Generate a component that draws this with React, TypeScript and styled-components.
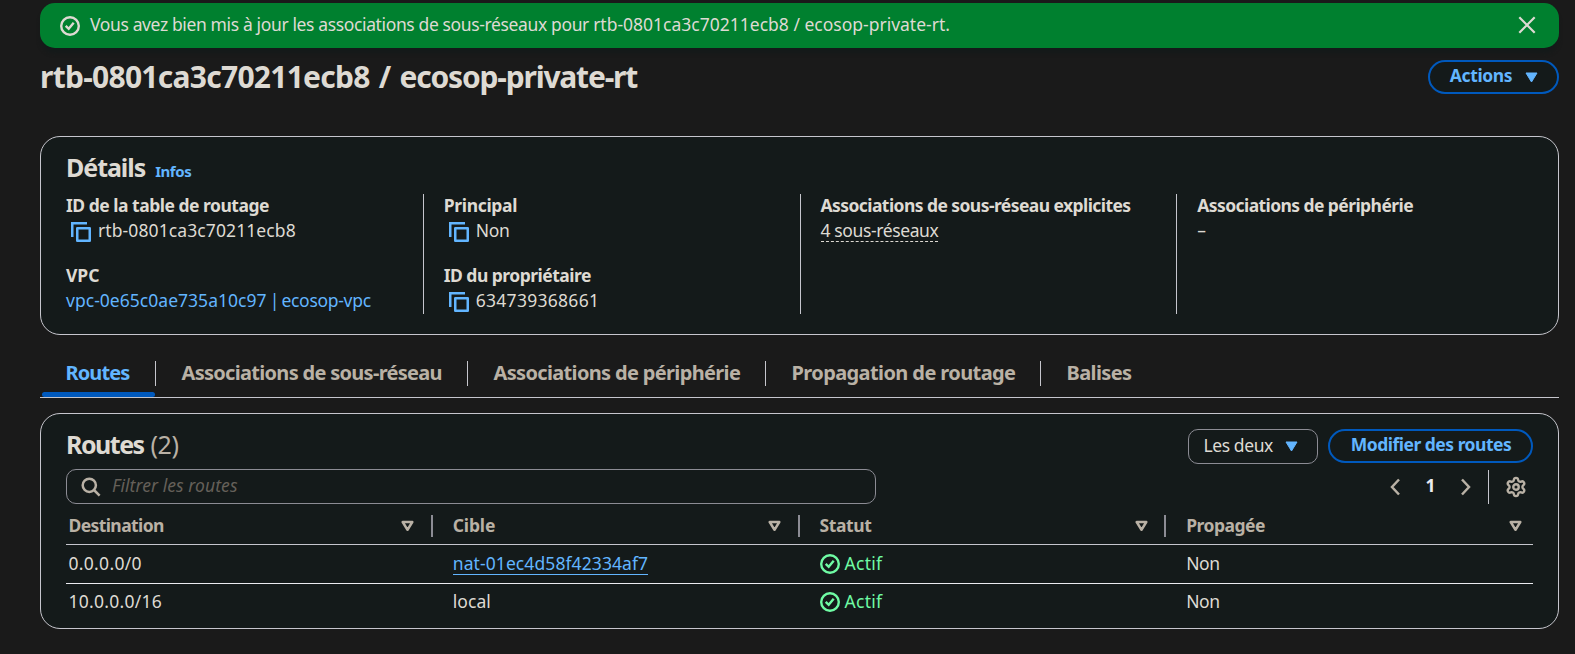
import React from 'react';
import styled, { createGlobalStyle } from 'styled-components';
import { Settings } from 'lucide-react';

const c = {
  page: '#1a1a1a',
  surface: '#141a1a',
  border: '#c6c6cd',
  control: '#8c8c94',
  text: '#dedad3',
  muted: '#b9b1a5',
  blue: '#62b5ff',
  blueDark: '#0059bd',
  success: '#6ffba4',
  banner: '#00802f',
};

const GlobalStyle = createGlobalStyle`
  * { box-sizing: border-box; }
  body {
    margin: 0;
    background: ${c.page};
    color: ${c.text};
    font-family: "Noto Sans", "Open Sans", sans-serif;
    font-size: 17.5px;
    line-height: 25px;
    overflow: hidden;
  }
  h1, h2 { margin: 0; font-weight: 700; }
  button { font: inherit; background: none; cursor: pointer; }
  svg { display: block; flex: none; }
`;

const Page = styled.main`
  display: flex;
  flex-direction: column;
  height: 654px;
  padding: 3px 16px 0 40px;
`;

/* Letter fitting for one run of text. */
const Fit = styled.span<{ $ls?: number; $ws?: number }>`
  letter-spacing: ${(p) => p.$ls ?? 0}px;
  word-spacing: ${(p) => p.$ws ?? 0}px;
  white-space: pre;
`;

const Banner = styled.div`
  display: flex;
  align-items: center;
  height: 45px;
  padding: 0 22px 0 20px;
  border-radius: 15px;
  background: ${c.banner};
  box-shadow: 0 6px 4px -1px ${c.surface};
`;

const BannerText = styled.div`
  flex: 1;
  margin-left: 10px;
  padding-bottom: 2px;
`;

const IconButton = styled.button`
  display: flex;
  padding: 0;
  border: 0;
  color: ${c.muted};
  ${Banner} & { padding-bottom: 2px; }
`;

const TitleRow = styled.header`
  display: flex;
  align-items: flex-start;
  justify-content: space-between;
  height: 34px;
  margin-top: 12px;
`;

const PageTitle = styled.h1`
  font-size: 30px;
  line-height: 34px;
`;

const PillButton = styled.button<{ $width: number }>`
  display: flex;
  align-items: center;
  justify-content: center;
  width: ${(p) => p.$width}px;
  height: 34px;
  padding: 0 0 3px 1px;
  border: 2px solid ${c.blueDark};
  border-radius: 17px;
  background: ${c.surface};
  color: ${c.blue};
  font-weight: 700;
  gap: 13px;
  svg { margin-top: 3px; }
`;

const Card = styled.section<{ $top: number; $height: number }>`
  height: ${(p) => p.$height}px;
  margin-top: ${(p) => p.$top}px;
  padding: 15px 25px 0;
  border: 1px solid ${c.border};
  border-radius: 20px;
  background: ${c.surface};
`;

const DetailsHeader = styled.div`
  display: flex;
  align-items: baseline;
  gap: 10px;
  height: 30px;
`;

const SectionTitle = styled.h2`
  font-size: 25px;
  line-height: 31px;
`;

const InfoLink = styled.a`
  color: ${c.blue};
  font-size: 15px;
  font-weight: 700;
`;

const Columns = styled.div`
  display: grid;
  grid-template-columns: repeat(4, 1fr);
  height: 120px;
  margin: 12px -20px 0;
`;

const Column = styled.div`
  display: flex;
  flex-direction: column;
  gap: 20px;
  padding-left: 20px;
  & + & { border-left: 1px solid ${c.border}; }
`;

const Field = styled.div`
  &:first-child { margin-top: -1px; }
`;

const Label = styled.div`
  font-weight: 700;
`;

const Value = styled.div`
  display: flex;
  align-items: center;
  height: 25px;
  svg { margin: 3px 7px 0 5px; }
`;

const Link = styled.a`
  color: ${c.blue};
`;

const UnderlinedLink = styled(Link)`
  display: inline-block;
  height: 23px;
  line-height: 22px;
  border-bottom: 1px solid ${c.blue};
`;

const Dashed = styled.span`
  height: 23px;
  line-height: 22px;
  border-bottom: 1px dashed ${c.text};
`;

const TabList = styled.nav`
  display: flex;
  height: 43px;
  margin-top: 20px;
  border-bottom: 1px solid ${c.border};
`;

const Tab = styled.a<{ $active?: boolean; $width: number }>`
  position: relative;
  width: ${(p) => p.$width}px;
  padding-top: 6px;
  color: ${(p) => (p.$active ? c.blue : c.muted)};
  font-size: 20px;
  font-weight: 700;
  ${(p) =>
    p.$active &&
    `&::after {
      content: '';
      position: absolute;
      left: 2px;
      right: 0;
      bottom: 0;
      height: 5px;
      border-radius: 3px;
      background: ${c.blueDark};
    }`}
`;

const TabLabel = styled.div`
  height: 25px;
  padding-left: 25.5px;
  line-height: 23px;
  ${Tab} + ${Tab} & { border-left: 1px solid ${c.border}; }
`;

const TableHeader = styled.div`
  display: flex;
  align-items: flex-start;
  height: 35px;
  gap: 10px;
`;

const Counter = styled.span`
  margin-left: 7px;
  color: ${c.muted};
  font-weight: 400;
  letter-spacing: -0.5px;
`;

const Spacer = styled.div`
  flex: 1;
`;

const Select = styled.button`
  display: flex;
  align-items: center;
  gap: 12px;
  width: 130px;
  height: 35px;
  padding: 0 0 3px 14.5px;
  border: 1px solid ${c.control};
  border-radius: 10px;
  color: ${c.text};
  svg { margin-top: 2px; color: ${c.blue}; }
`;

const FilterRow = styled.div`
  display: flex;
  align-items: center;
  justify-content: space-between;
  height: 35px;
  margin-top: 5px;
`;

const Search = styled.div`
  display: flex;
  align-items: center;
  width: 810px;
  height: 35px;
  gap: 11px;
  padding-left: 14px;
  border: 1px solid ${c.control};
  border-radius: 10px;
  color: ${c.muted};
`;

const Placeholder = styled.span`
  padding-bottom: 2px;
  color: #656059;
  font-style: italic;
`;

const Pager = styled.div`
  display: flex;
  align-items: center;
  height: 35px;
  padding-right: 6px;
`;

const PageNumber = styled.span`
  width: 61px;
  padding-bottom: 2px;
  color: #ebebf0;
  font-weight: 700;
  text-align: center;
`;

const PagerDivider = styled.i`
  width: 1px;
  height: 34px;
  margin: 0 16px 0 17px;
  background: ${c.border};
`;

const Table = styled.div`
  display: flex;
  flex-direction: column;
`;

const Row = styled.div<{ $height: number; $line?: string }>`
  display: grid;
  grid-template-columns: repeat(4, 1fr);
  height: ${(p) => p.$height}px;
  border-bottom: 1px solid ${(p) => p.$line ?? 'transparent'};
`;

const Cell = styled.div`
  display: flex;
  align-items: center;
  padding: 0 0 1px 20px;
  &:first-child { padding-left: 2.5px; }
`;

const HeadCell = styled(Cell)`
  justify-content: space-between;
  padding-right: 17px;
  padding-top: 3px;
  color: ${c.muted};
  font-weight: 700;
  background: linear-gradient(${c.control}, ${c.control}) right 11px / 2px 22px no-repeat;
  svg { margin: 1px 1.5px 0 0; }
  &:last-child { background: none; padding-right: 9.5px; }
`;

const Status = styled.span`
  display: flex;
  align-items: center;
  gap: 5px;
  color: ${c.success};
  svg { margin-top: 1px; }
`;

const CheckIcon = () => (
  <svg width="20" height="20" viewBox="0 0 20 20" fill="none" stroke="currentColor" strokeWidth="2.4">
    <circle cx="10" cy="10" r="8.8" />
    <path d="M5.7 9.8l3 3 5-6" />
  </svg>
);

const CloseIcon = () => (
  <svg width="20" height="20" viewBox="0 0 20 20" fill="none" stroke={c.text} strokeWidth="2.2">
    <path d="M2.3 2.3l15.4 15.4M17.7 2.3L2.3 17.7" />
  </svg>
);

const CaretIcon = () => (
  <svg width="13" height="11" viewBox="0 0 13 11" fill="currentColor" stroke="currentColor" strokeLinejoin="round">
    <path d="M1 1h11L6.5 10z" />
  </svg>
);

const SortIcon = () => (
  <svg width="13" height="12" viewBox="0 0 13 12" fill="none" stroke="currentColor" strokeWidth="2.5" strokeLinejoin="round">
    <path d="M1.7 2h9.6L6.5 9.8z" />
  </svg>
);

const CopyIcon = () => (
  <svg width="20" height="20" viewBox="0 0 20 20" fill="none" stroke={c.blue} strokeWidth="2.5">
    <path d="M1.25 15V1.25H16" />
    <rect x="6.25" y="6.25" width="12.5" height="12.5" strokeLinejoin="round" />
  </svg>
);

const SearchIcon = () => (
  <svg width="20" height="20" viewBox="0 0 20 20" fill="none" stroke="currentColor" strokeWidth="2.5">
    <circle cx="8.3" cy="8.3" r="6.6" />
    <path d="M13 13l5.6 5.6" />
  </svg>
);

const Chevron = ({ d }: { d: string }) => (
  <svg width="10" height="18" viewBox="0 0 10 18" fill="none" stroke="currentColor" strokeWidth="2.5">
    <path d={d} />
  </svg>
);

const tabs = [
  { text: 'Routes', width: 115, ls: -0.9 },
  { text: 'Associations de sous-réseau', width: 312, ls: -0.7 },
  { text: 'Associations de périphérie', width: 298, ls: -0.66 },
  { text: 'Propagation de routage', width: 275, ls: -0.6 },
  { text: 'Balises', width: 120, ls: -0.6 },
];

const heads = [
  { text: 'Destination', ls: -0.6 },
  { text: 'Cible', ls: -0.15 },
  { text: 'Statut', ls: -0.4 },
  { text: 'Propagée', ls: -0.52 },
];

export default function App() {
  return (
    <>
      <GlobalStyle />
      <Page>
        <Banner>
          <CheckIcon />
          <BannerText>
            <Fit $ls={-0.37}>{'Vous avez bien mis à jour les associations de sous-réseaux pour '}</Fit>
            <Fit>rtb-0801ca3c70211ecb8 / ecosop-private-rt.</Fit>
          </BannerText>
          <IconButton aria-label="Fermer"><CloseIcon /></IconButton>
        </Banner>

        <TitleRow>
          <PageTitle>
            <Fit $ls={-0.73} $ws={2}>{'rtb-0801ca3c70211ecb8 / '}</Fit>
            <Fit $ls={-1.2}>ecosop-private-rt</Fit>
          </PageTitle>
          <PillButton $width={131}><Fit $ls={-0.4}>Actions</Fit><CaretIcon /></PillButton>
        </TitleRow>

        <Card $top={42} $height={199}>
          <DetailsHeader>
            <SectionTitle><Fit $ls={-1.05}>Détails</Fit></SectionTitle>
            <InfoLink><Fit $ls={-0.45}>Infos</Fit></InfoLink>
          </DetailsHeader>
          <Columns>
            <Column>
              <Field>
                <Label><Fit $ls={-0.49}>ID de la table de routage</Fit></Label>
                <Value><CopyIcon /><Fit $ls={0.1}>rtb-0801ca3c70211ecb8</Fit></Value>
              </Field>
              <Field>
                <Label><Fit>VPC</Fit></Label>
                <Value>
                  <Link>
                    <Fit $ls={0.03}>vpc-0e65c0ae735a10c97</Fit>
                    <Fit $ls={-1.3}>{' | '}</Fit>
                    <Fit $ls={-0.3}>ecosop-vpc</Fit>
                  </Link>
                </Value>
              </Field>
            </Column>
            <Column>
              <Field>
                <Label><Fit $ls={-0.33}>Principal</Fit></Label>
                <Value><CopyIcon /><Fit $ls={-0.3}>Non</Fit></Value>
              </Field>
              <Field>
                <Label><Fit $ls={-0.52}>ID du propriétaire</Fit></Label>
                <Value><CopyIcon /><Fit $ls={0.28}>634739368661</Fit></Value>
              </Field>
            </Column>
            <Column>
              <Field>
                <Label><Fit $ls={-0.57}>Associations de sous-réseau explicites</Fit></Label>
                <Value><Dashed><Fit $ls={-0.38}>4 sous-réseaux</Fit></Dashed></Value>
              </Field>
            </Column>
            <Column>
              <Field>
                <Label><Fit $ls={-0.58}>Associations de périphérie</Fit></Label>
                <Value>–</Value>
              </Field>
            </Column>
          </Columns>
        </Card>

        <TabList>
          {tabs.map((t, i) => (
            <Tab key={t.text} $active={i === 0} $width={t.width}>
              <TabLabel><Fit $ls={t.ls}>{t.text}</Fit></TabLabel>
            </Tab>
          ))}
        </TabList>

        <Card $top={15} $height={216}>
          <TableHeader>
            <SectionTitle>
              <Fit $ls={-1.5}>Routes</Fit>
              <Counter>(2)</Counter>
            </SectionTitle>
            <Spacer />
            <Select><Fit $ls={-0.4}>Les deux</Fit><CaretIcon /></Select>
            <PillButton $width={205}><Fit $ls={-0.5}>Modifier des routes</Fit></PillButton>
          </TableHeader>
          <FilterRow>
            <Search>
              <SearchIcon />
              <Placeholder><Fit $ls={0.08}>Filtrer les routes</Fit></Placeholder>
            </Search>
            <Pager>
              <IconButton aria-label="Page précédente"><Chevron d="M9 1.5L2 9l7 7.5" /></IconButton>
              <PageNumber>1</PageNumber>
              <IconButton aria-label="Page suivante"><Chevron d="M1 1.5L8 9l-7 7.5" /></IconButton>
              <PagerDivider />
              <IconButton aria-label="Préférences"><Settings size={22} strokeWidth={2.6} /></IconButton>
            </Pager>
          </FilterRow>
          <Table>
            <Row $height={41} $line={c.border}>
              {heads.map((h) => (
                <HeadCell key={h.text}><Fit $ls={h.ls}>{h.text}</Fit><SortIcon /></HeadCell>
              ))}
            </Row>
            <Row $height={39} $line="#ebebf0">
              <Cell><Fit $ls={0.3}>0.0.0.0/0</Fit></Cell>
              <Cell><UnderlinedLink><Fit $ls={0.09}>nat-01ec4d58f42334af7</Fit></UnderlinedLink></Cell>
              <Cell><Status><CheckIcon /><Fit $ls={0.3}>Actif</Fit></Status></Cell>
              <Cell><Fit $ls={-0.5}>Non</Fit></Cell>
            </Row>
            <Row $height={36}>
              <Cell><Fit $ls={0.27}>10.0.0.0/16</Fit></Cell>
              <Cell><Fit $ls={0.05}>local</Fit></Cell>
              <Cell><Status><CheckIcon /><Fit $ls={0.3}>Actif</Fit></Status></Cell>
              <Cell><Fit $ls={-0.5}>Non</Fit></Cell>
            </Row>
          </Table>
        </Card>
      </Page>
    </>
  );
}
